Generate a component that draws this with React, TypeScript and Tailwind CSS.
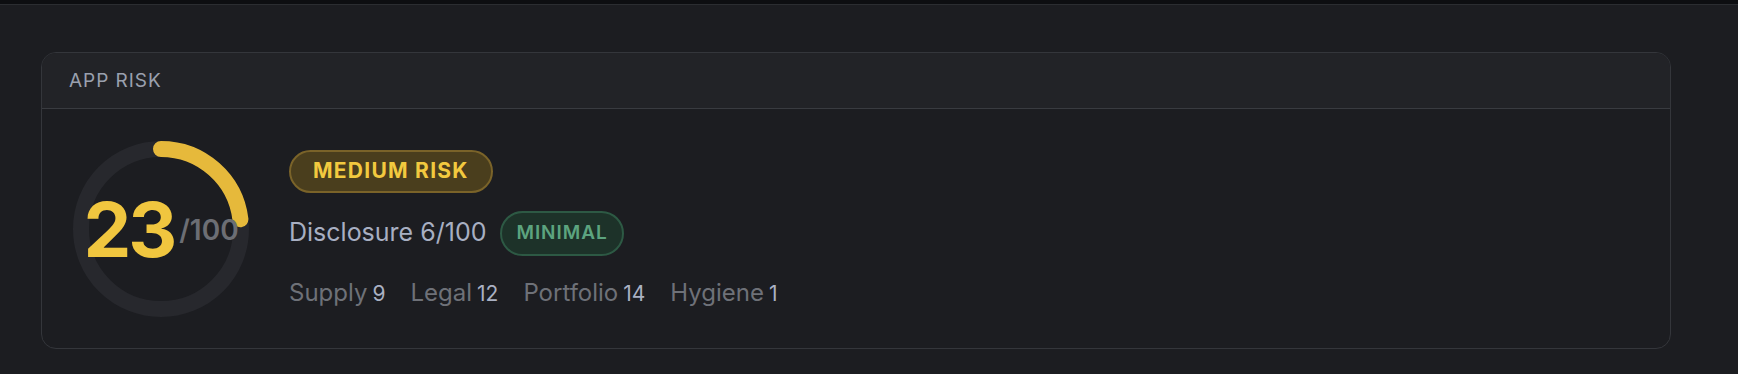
import React from "react";

const scores = [
  { label: "Supply", value: 9 },
  { label: "Legal", value: 12 },
  { label: "Portfolio", value: 14 },
  { label: "Hygiene", value: 1 },
];

const Gauge = ({ score }: { score: number }) => {
  const r = 80;
  const c = 2 * Math.PI * r;
  return (
    <div className="relative w-[176px] h-[176px] shrink-0">
      <svg width="176" height="176" viewBox="0 0 176 176" className="-rotate-90">
        <circle cx="88" cy="88" r={r} fill="none" stroke="#27282d" strokeWidth="16" />
        <circle
          cx="88"
          cy="88"
          r={r}
          fill="none"
          stroke="#e6b93b"
          strokeWidth="16"
          strokeLinecap="round"
          strokeDasharray={`${(c * score) / 100} ${c}`}
        />
      </svg>
      <div className="absolute inset-0 flex items-center justify-center">
        <span className="text-[76px] leading-none font-bold text-[#f0c63f] tracking-[-0.04em]">
          {score}
        </span>
        <span className="text-[28px] leading-none font-semibold text-[#6c6e74] ml-[5px] mt-[1px]">
          /100
        </span>
      </div>
    </div>
  );
};

const App = () => {
  return (
    <div
      className="w-full h-[374px] bg-[#1c1d21] overflow-hidden"
      style={{ fontFamily: "Inter, 'Noto Sans', sans-serif" }}
    >
      <div className="h-[5px] bg-[#0d0e11] border-b border-[#2b2d31]" />
      <div className="pl-[41px] pr-[67px] pt-[47px]">
        <div className="rounded-[15px] border border-[#34363b] bg-[#1c1d21] overflow-hidden">
          <div className="h-[56px] bg-[#222327] border-b border-[#393b40] flex items-center pl-[27px]">
            <span className="text-[19px] tracking-[0.05em] text-[#9aa0ae] mt-[1px]">APP RISK</span>
          </div>
          <div className="flex items-center p-[31px] pt-[32px] pb-[31px]">
            <Gauge score={23} />
            <div className="ml-[40px] flex flex-col items-start">
              <span className="h-[43px] px-[22px] flex items-center rounded-full border-2 border-[#7a6329] bg-[#4a3e1d] text-[#f2c93f] text-[21px] font-bold tracking-[0.06em]">
                MEDIUM RISK
              </span>
              <div className="flex items-center gap-[14px] mt-[18px]">
                <span className="text-[25px] text-[#a8afc2]">Disclosure 6/100</span>
                <span className="h-[45px] px-[14px] flex items-center rounded-full border-2 border-[#2d5944] bg-[#1d3229] text-[#5ca47f] text-[19px] font-semibold tracking-[0.05em]">
                  MINIMAL
                </span>
              </div>
              <div className="flex items-baseline gap-[25px] mt-[22px] leading-[30px]">
                {scores.map((s) => (
                  <div key={s.label} className="flex items-baseline">
                    <span className="text-[24px] text-[#6e7178]">{s.label}</span>
                    <span className="text-[21px] text-[#aab1c3] ml-[5px]">{s.value}</span>
                  </div>
                ))}
              </div>
            </div>
          </div>
        </div>
      </div>
    </div>
  );
};

export default App;
